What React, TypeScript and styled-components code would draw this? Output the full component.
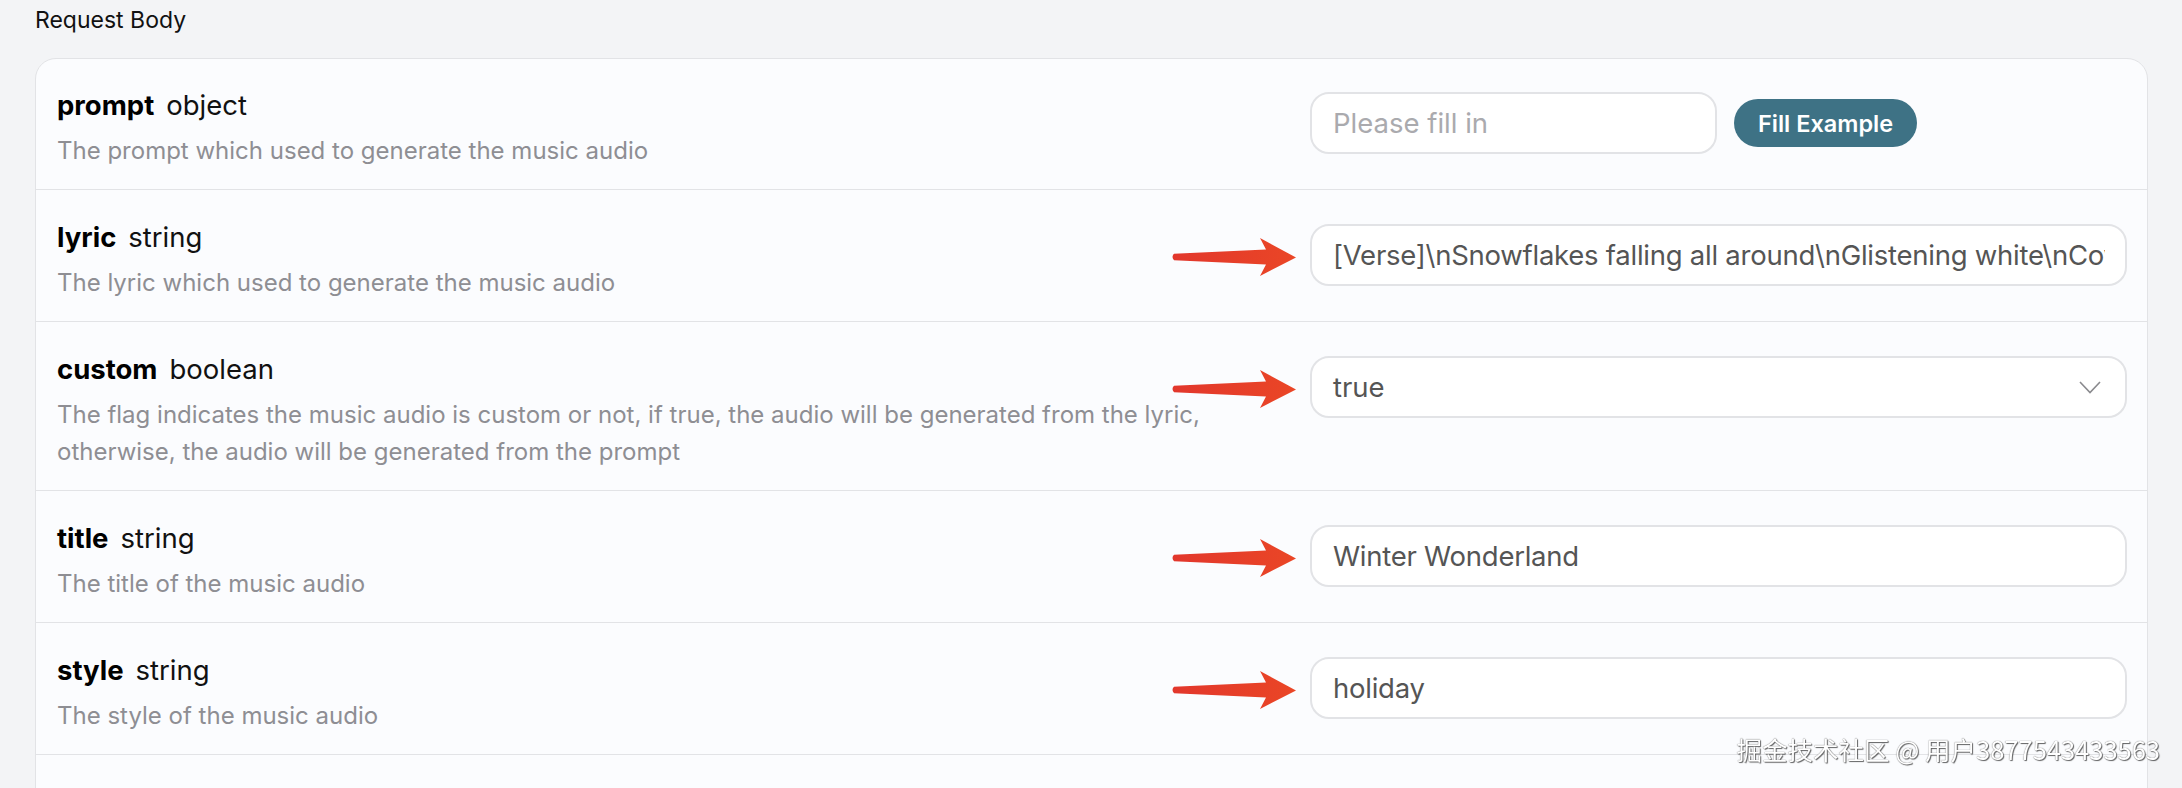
import styled, { createGlobalStyle } from 'styled-components';

const GlobalStyle = createGlobalStyle`
    html, body {
        margin: 0;
        padding: 0;
        overflow: hidden;
        background: #f3f4f6;
        font-family: Inter, "Noto Sans", sans-serif;
    }
`;

const Page = styled.div`
    padding: 0 34px 0 35px;
`;

const Heading = styled.div`
    font-size: 23px;
    line-height: 40px;
    color: #111;
`;

const Card = styled.div`
    margin-top: 18px;
    background: #fbfcfe;
    border: 1px solid #e2e3e6;
    border-radius: 21px;
    overflow: hidden;
`;

const Row = styled.div`
    display: grid;
    grid-template-columns: 1fr 817px;
    column-gap: 50px;
    padding: 27px 20px 20px 21px;
    border-top: 1px solid #e2e3e6;

    &:first-child {
        border-top: none;
        padding-top: 26px;
    }
`;

const Info = styled.div`
    min-width: 0;
`;

const Title = styled.div`
    font-size: 27.5px;
    line-height: 40px;
    color: #000;
`;

const Name = styled.span`
    font-weight: 700;
`;

const Type = styled.span`
    margin-left: 12px;
    color: #111;
`;

const Desc = styled.div`
    margin-top: 7px;
    font-size: 24px;
    line-height: 37px;
    color: #8e8e93;
`;

const Control = styled.div`
    position: relative;
    margin-top: 7px;
    display: flex;
    align-items: center;
    gap: 17px;
    height: 62px;
`;

const TextInput = styled.input<{ $width?: number }>`
    box-sizing: border-box;
    width: ${(p) => (p.$width ? `${p.$width}px` : '100%')};
    height: 62px;
    padding: 0 20px 0 21px;
    border: 2px solid #e2e3e6;
    border-radius: 19px;
    background: #fff;
    font-family: Inter, "Noto Sans", sans-serif;
    font-size: 27.5px;
    letter-spacing: -0.25px;
    color: #555;
    outline: none;

    &::placeholder {
        color: #aaaaae;
        letter-spacing: 0;
    }
`;

const SelectBox = styled.div`
    box-sizing: border-box;
    width: 100%;
    height: 62px;
    padding: 0 24px 0 21px;
    border: 2px solid #e2e3e6;
    border-radius: 19px;
    background: #fff;
    display: flex;
    align-items: center;
    justify-content: space-between;
    font-size: 27.5px;
    color: #555;
`;

const FillButton = styled.button`
    height: 48px;
    padding: 0 24px;
    border: none;
    border-radius: 24px;
    background: #3e7285;
    color: #fff;
    font-family: Inter, "Noto Sans", sans-serif;
    font-size: 23.5px;
    font-weight: 600;
    white-space: nowrap;
    cursor: pointer;
`;

const Pointer = styled.svg`
    position: absolute;
    left: -140px;
    top: 13px;
    width: 128px;
    height: 40px;
`;

const Watermark = styled.div`
    position: fixed;
    right: 22px;
    bottom: 21px;
    font-family: "Noto Sans CJK SC", sans-serif;
    font-size: 25.5px;
    color: #fff;
    text-shadow: 0 0 1px #444, 1px 1px 1px rgba(0, 0, 0, 0.6);
    white-space: nowrap;
`;

function Arrow() {
    return (
        <Pointer viewBox="0 0 128 40">
            <defs>
                <linearGradient id="arrowFill" x1="0" x2="1" y1="0" y2="0">
                    <stop offset="0" stopColor="#e2372c" />
                    <stop offset="1" stopColor="#ea4626" />
                </linearGradient>
            </defs>
            <path
                d="M4 16.8 L96 12.5 L90 1 L126 20.5 L90 39 L96 27.5 L4 23.2 Q1 20 4 16.8 Z"
                fill="url(#arrowFill)"
            />
        </Pointer>
    );
}

function Chevron() {
    return (
        <svg width="22" height="13" viewBox="0 0 22 13">
            <path d="M1 1 L11 11.5 L21 1" fill="none" stroke="#8a8a8e" strokeWidth="1.6" />
        </svg>
    );
}

type Field = {
    name?: string;
    type?: string;
    desc?: string;
    value?: string;
    kind: 'prompt' | 'input' | 'select';
    marked?: boolean;
};

// the last row only peeks in at the bottom edge of the frame
const fields: Field[] = [
    {
        name: 'prompt',
        type: 'object',
        desc: 'The prompt which used to generate the music audio',
        kind: 'prompt',
    },
    {
        name: 'lyric',
        type: 'string',
        desc: 'The lyric which used to generate the music audio',
        value: '[Verse]\\nSnowflakes falling all around\\nGlistening white\\nCovering the ground\\n',
        kind: 'input',
        marked: true,
    },
    {
        name: 'custom',
        type: 'boolean',
        desc: 'The flag indicates the music audio is custom or not, if true, the audio will be generated from the lyric, otherwise, the audio will be generated from the prompt',
        value: 'true',
        kind: 'select',
        marked: true,
    },
    {
        name: 'title',
        type: 'string',
        desc: 'The title of the music audio',
        value: 'Winter Wonderland',
        kind: 'input',
        marked: true,
    },
    {
        name: 'style',
        type: 'string',
        desc: 'The style of the music audio',
        value: 'holiday',
        kind: 'input',
        marked: true,
    },
    {
        value: '',
        kind: 'input',
    },
];

export default function App() {
    return (
        <>
            <GlobalStyle />
            <Page>
                <Heading>Request Body</Heading>
                <Card>
                    {fields.map((f, i) => (
                        <Row key={i}>
                            <Info>
                                {f.name && (
                                    <>
                                        <Title>
                                            <Name>{f.name}</Name>
                                            <Type>{f.type}</Type>
                                        </Title>
                                        <Desc>{f.desc}</Desc>
                                    </>
                                )}
                            </Info>
                            <Control>
                                {f.marked && <Arrow />}
                                {f.kind === 'prompt' && (
                                    <>
                                        <TextInput $width={407} placeholder="Please fill in" />
                                        <FillButton>Fill Example</FillButton>
                                    </>
                                )}
                                {f.kind === 'input' && (
                                    <TextInput defaultValue={f.value} />
                                )}
                                {f.kind === 'select' && (
                                    <SelectBox>
                                        <span>{f.value}</span>
                                        <Chevron />
                                    </SelectBox>
                                )}
                            </Control>
                        </Row>
                    ))}
                </Card>
            </Page>
            <Watermark>掘金技术社区 @ 用户3877543433563</Watermark>
        </>
    );
}
